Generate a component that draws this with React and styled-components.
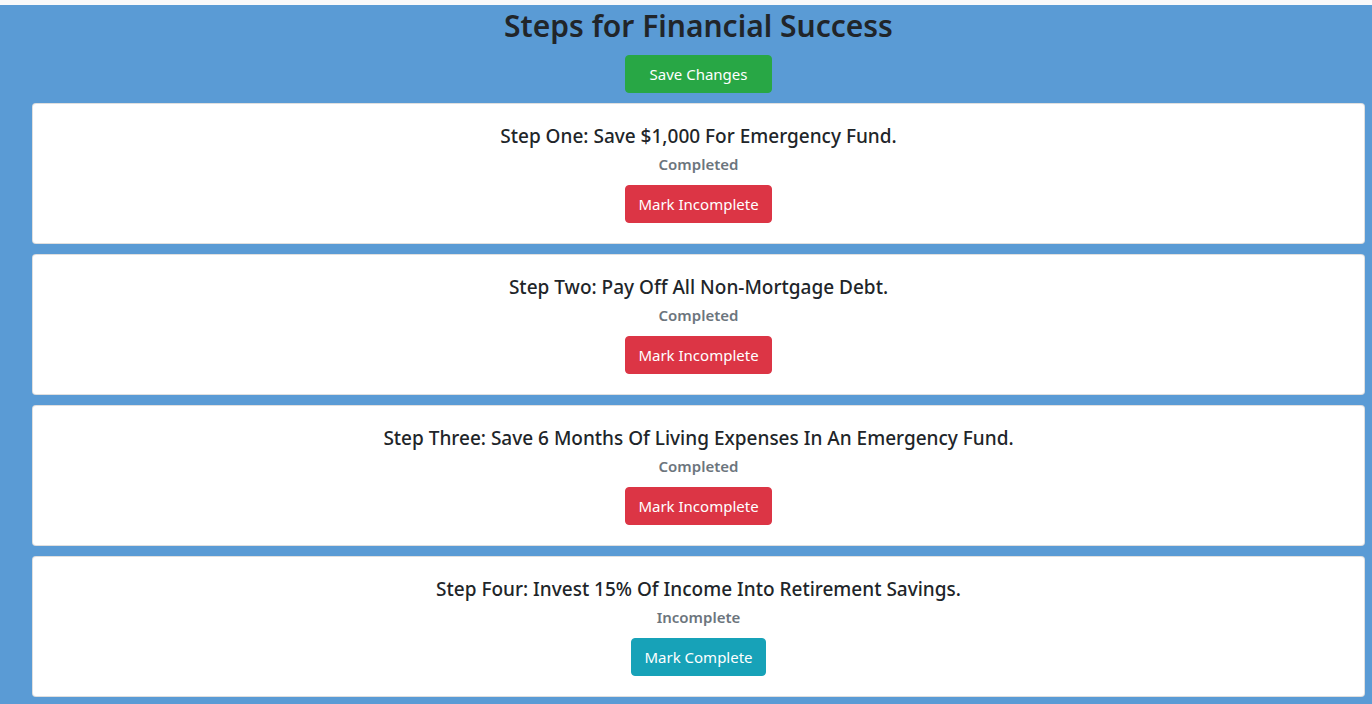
import React, { useState } from "react";
import styled, { createGlobalStyle } from "styled-components";

const GlobalStyle = createGlobalStyle`
  body {
    margin: 0;
    background: #f8f9fa;
    font-family: "Noto Sans", "Open Sans", sans-serif;
    color: #212529;
  }
`;

const Page = styled.div`
  margin-top: 5px;
  background: #5a9bd5;
  padding: 0 7px 8px 32px;
  min-height: 699px;
  box-sizing: border-box;
`;

const Header = styled.div`
  display: flex;
  flex-direction: column;
  align-items: center;
`;

const Title = styled.h1`
  margin: 0;
  font-size: 30px;
  line-height: 42px;
  font-weight: 600;
  color: #212529;
`;

const Button = styled.button`
  font-family: inherit;
  font-size: 15px;
  line-height: 24px;
  padding: 6px ${(p) => (p.$wide ? 24 : 12)}px;
  border-radius: 4px;
  border: 1px solid ${(p) => p.$color};
  background: ${(p) => p.$color};
  color: #fff;
  cursor: pointer;
  margin-top: ${(p) => p.$top || 0}px;
`;

const List = styled.div`
  display: flex;
  flex-direction: column;
  gap: 10px;
  margin-top: 10px;
`;

const Card = styled.div`
  background: #fff;
  border: 1px solid rgba(0, 0, 0, 0.125);
  border-radius: 4px;
  padding: 20px;
  display: flex;
  flex-direction: column;
  align-items: center;
`;

const StepTitle = styled.h5`
  margin: 0;
  font-size: 19px;
  line-height: 24px;
  font-weight: 500;
`;

const Status = styled.h6`
  margin: 7px 0 0;
  font-size: 15px;
  line-height: 19px;
  font-weight: 600;
  color: #6c757d;
`;

const initialSteps = [
  { title: "Step One: Save $1,000 For Emergency Fund.", done: true },
  { title: "Step Two: Pay Off All Non-Mortgage Debt.", done: true },
  {
    title: "Step Three: Save 6 Months Of Living Expenses In An Emergency Fund.",
    done: true,
  },
  {
    title: "Step Four: Invest 15% Of Income Into Retirement Savings.",
    done: false,
  },
];

const App = () => {
  const [steps, setSteps] = useState(initialSteps);

  const toggle = (i) => {
    setSteps(steps.map((s, j) => (j === i ? { ...s, done: !s.done } : s)));
  };

  return (
    <>
      <GlobalStyle />
      <Page>
        <Header>
          <Title>Steps for Financial Success</Title>
          <Button $color="#28a745" $top={8} $wide>
            Save Changes
          </Button>
        </Header>
        <List>
          {steps.map((step, i) => (
            <Card key={step.title}>
              <StepTitle>{step.title}</StepTitle>
              <Status>{step.done ? "Completed" : "Incomplete"}</Status>
              <Button
                $color={step.done ? "#dc3545" : "#17a2b8"}
                $top={11}
                onClick={() => toggle(i)}
              >
                {step.done ? "Mark Incomplete" : "Mark Complete"}
              </Button>
            </Card>
          ))}
        </List>
      </Page>
    </>
  );
};

export default App;
